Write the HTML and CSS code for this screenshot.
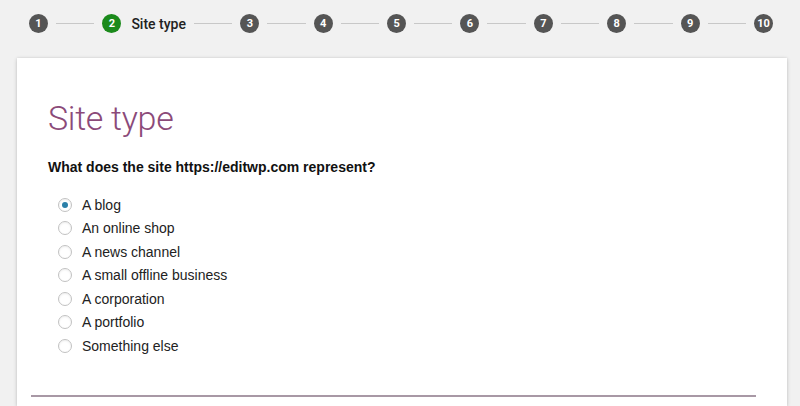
FILE: index.html
```html
<!DOCTYPE html>
<html lang="en">
<head>
<meta charset="utf-8">
<title>Site type</title>
<link rel="stylesheet" href="styles.css">
</head>
<body>
<nav class="steps">
  <span class="step">1</span><span class="sep"></span>
  <span class="step active">2</span><span class="step-label">Site type</span><span class="sep"></span>
  <span class="step">3</span><span class="sep"></span>
  <span class="step">4</span><span class="sep"></span>
  <span class="step">5</span><span class="sep"></span>
  <span class="step">6</span><span class="sep"></span>
  <span class="step">7</span><span class="sep"></span>
  <span class="step">8</span><span class="sep"></span>
  <span class="step">9</span><span class="sep"></span>
  <span class="step">10</span>
</nav>
<main class="card">
  <h1 class="title">Site type</h1>
  <p class="question">What does the site https://editwp.com represent?</p>
  <ul class="options">
    <li class="option"><span class="radio checked"></span>A blog</li>
    <li class="option"><span class="radio"></span>An online shop</li>
    <li class="option"><span class="radio"></span>A news channel</li>
    <li class="option"><span class="radio"></span>A small offline business</li>
    <li class="option"><span class="radio"></span>A corporation</li>
    <li class="option"><span class="radio"></span>A portfolio</li>
    <li class="option"><span class="radio"></span>Something else</li>
  </ul>
  <hr class="divider">
</main>
</body>
</html>
```
FILE: styles.css
```css
html, body {
  margin: 0;
  padding: 0;
  background: #f1f1f1;
  overflow: hidden;
  height: 406px;
}
body {
  font-family: "Liberation Sans", Arial, sans-serif;
  color: #1d1d1d;
}
.steps {
  display: flex;
  align-items: center;
  padding: 14px 27px 0 29px;
  height: 19px;
}
.step {
  flex: none;
  width: 19px;
  height: 19px;
  border-radius: 50%;
  background: #555;
  color: #fff;
  font-family: Roboto, "Liberation Sans", sans-serif;
  font-weight: 700;
  font-size: 11px;
  line-height: 19px;
  text-align: center;
}
.step.active {
  background: #1b8a1b;
}
.step-label {
  flex: none;
  margin-left: 10px;
  font-family: Roboto, "Liberation Sans", sans-serif;
  font-weight: 500;
  font-size: 14px;
  color: #222;
}
.sep {
  flex: 1;
  height: 1px;
  background: #c8c8c8;
  margin: 0 8px;
}
.card {
  margin: 25px 13px 0 17px;
  background: #fff;
  box-shadow: 0 1px 4px rgba(0,0,0,0.18), 0 0 2px rgba(0,0,0,0.08);
  padding: 40px 31px 0 31px;
  height: 348px;
  box-sizing: border-box;
}
.title {
  margin: 0;
  font-family: Roboto, "Liberation Sans", sans-serif;
  font-weight: 300;
  font-size: 34px;
  letter-spacing: -0.3px;
  line-height: 40px;
  color: #8b4a79;
}
.question {
  margin: 19px 0 0 0;
  font-size: 14px;
  line-height: 20px;
  font-weight: 700;
  color: #111;
}
.options {
  list-style: none;
  margin: 16px 0 0 0;
  padding: 0 0 0 10px;
}
.option {
  display: flex;
  align-items: center;
  height: 23.5px;
  font-size: 14px;
  color: #222;
}
.radio {
  width: 14px;
  height: 14px;
  box-sizing: border-box;
  border: 1px solid #c2c2c2;
  border-radius: 50%;
  margin-right: 10px;
  display: flex;
  align-items: center;
  justify-content: center;
  box-shadow: inset 0 1px 2px rgba(0,0,0,0.07);
}
.radio.checked::after {
  content: "";
  width: 6px;
  height: 6px;
  border-radius: 50%;
  background: #2a7fa8;
}
.divider {
  margin: 37px 0 0 -17px;
  width: 725px;
  border: 0;
  height: 2px;
  background: #a898a5;
}
```
